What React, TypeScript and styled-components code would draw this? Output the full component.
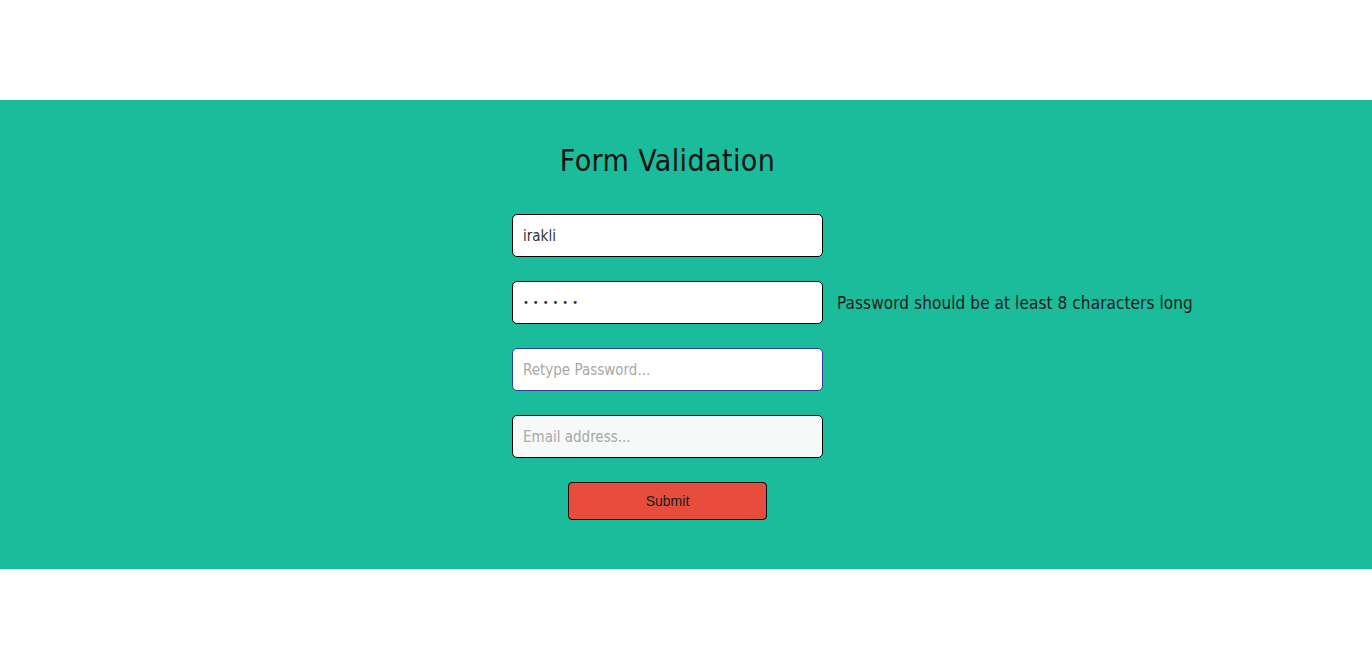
import { createGlobalStyle } from 'styled-components';
import styled from 'styled-components';

const GlobalStyle = createGlobalStyle`
  body {
    margin: 0;
    background: #ffffff;
    font-family: 'DejaVu Sans Condensed', 'DejaVu Sans', sans-serif;
  }
`;

const Page = styled.div`
  padding-top: 100px;
  height: 649px;
  box-sizing: border-box;
`;

const Band = styled.section`
  background: #1abc9c;
  height: 469px;
  box-sizing: border-box;
  padding: 43px 37px 0 0;
`;

const Title = styled.h1`
  margin: 0 0 36px;
  text-align: center;
  font-size: 30px;
  font-weight: normal;
  color: #111;
  line-height: 35px;
  letter-spacing: 0.4px;
`;

const Form = styled.form`
  display: grid;
  grid-template-columns: minmax(0, 1fr) 311px minmax(0, 1fr);
  row-gap: 24px;
  align-items: center;
`;

const Input = styled.input<{ $focused?: boolean; $tinted?: boolean; $masked?: boolean }>`
  grid-column: 2;
  box-sizing: border-box;
  width: 311px;
  height: 43px;
  padding: 0 10px;
  border: 1px solid ${(p) => (p.$focused ? '#2a3f9e' : '#000')};
  border-radius: 5px;
  background: ${(p) => (p.$tinted ? '#f7f9f9' : '#fff')};
  font-family: inherit;
  font-size: ${(p) => (p.$masked ? '11px' : '15px')};
  letter-spacing: ${(p) => (p.$masked ? '4px' : 'normal')};
  color: #333;
  outline: none;

  &::placeholder {
    color: #a8a8a8;
  }
`;

const Message = styled.span`
  grid-column: 3;
  padding-left: 14px;
  font-size: 17px;
  letter-spacing: 0.1px;
  color: #1a1a1a;
  white-space: nowrap;
`;

const Submit = styled.button`
  grid-column: 2;
  justify-self: center;
  width: 199px;
  height: 38px;
  background: #e74c3c;
  border: 1px solid #000;
  border-radius: 4px;
  font-family: 'Liberation Sans', Arial, sans-serif;
  font-size: 14px;
  color: #1a1a1a;
  cursor: pointer;
`;

const App = () => {
  return (
    <>
      <GlobalStyle />
      <Page>
        <Band>
          <Title>Form Validation</Title>
          <Form onSubmit={(e) => e.preventDefault()}>
            <Input type="text" defaultValue="irakli" placeholder="Username..." />
            <Input type="password" defaultValue="123456" placeholder="Password..." $masked />
            <Message>Password should be at least 8 characters long</Message>
            <Input type="password" placeholder="Retype Password..." $focused />
            <Input type="email" placeholder="Email address..." $tinted />
            <Submit type="submit">Submit</Submit>
          </Form>
        </Band>
      </Page>
    </>
  );
};

export default App;
